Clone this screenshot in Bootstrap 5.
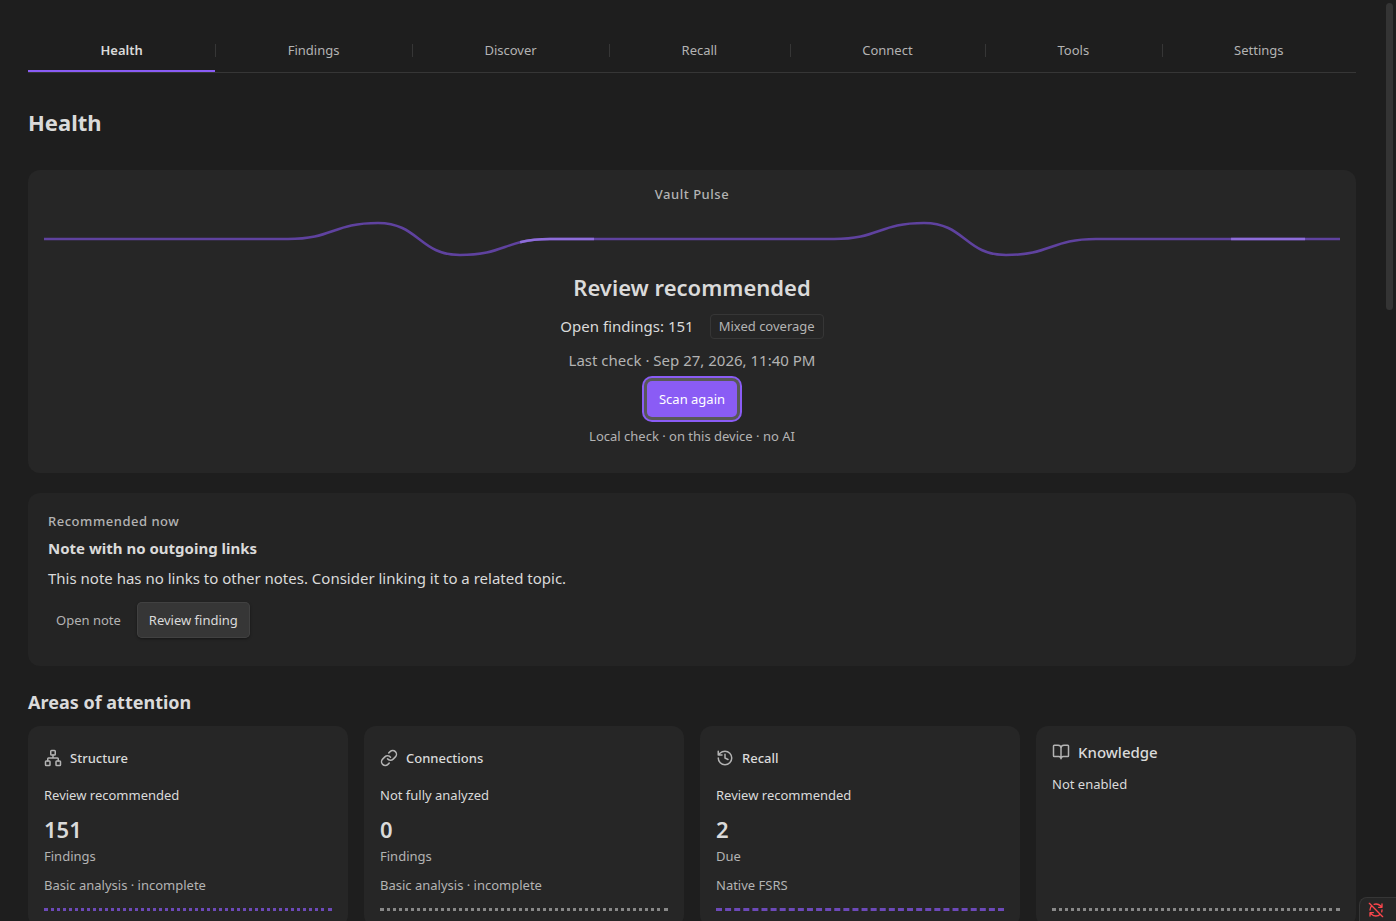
<!DOCTYPE html>
<html lang="en" data-bs-theme="dark">
<head>
<meta charset="utf-8">
<meta name="viewport" content="width=device-width, initial-scale=1">
<title>Health</title>
<link href="https://cdn.jsdelivr.net/npm/bootstrap@5.3.0/dist/css/bootstrap.min.css" rel="stylesheet">
<style>
:root { --accent: #8a5cf5; --line: #363636; --ink: #dadada; --muted: #b3b3b3; }
html, body { height: 100%; }
body { background: #1e1e1e; color: var(--ink); font: 400 15px/24px "Noto Sans", sans-serif; overflow: hidden; }
h1, h2, h3, p { margin: 0; color: inherit; }
.page-body { padding: 28px 40px 28px 28px; }
.text-dim { color: var(--muted); }
.small-text { font-size: 13px; line-height: 20px; }
.tab-bar { border-bottom: 1px solid var(--line); }
.tab-bar .nav-link { position: relative; height: 44px; padding: 0 8px; color: var(--muted); font-size: 13px; line-height: 20px; border: 0; }
.tab-bar .nav-item + .nav-item .nav-link::before { content: ""; position: absolute; left: 0; top: 16px; height: 13px; width: 1px; background: var(--line); }
.tab-bar .nav-link.active { color: var(--ink); font-weight: 600; box-shadow: inset 0 -2px var(--accent); }
.page-title { font-size: 22px; line-height: 30px; font-weight: 700; margin: 34px 0 33px; }
.panel { background: #262626; border-radius: 12px; }
.pulse-panel { padding: 14px 16px 27px; margin-bottom: 20px; }
.next-panel { background: #242424; padding: 18px 20px 28px; margin-bottom: 22px; }
.eyebrow { font-size: 13px; line-height: 20px; font-weight: 500; letter-spacing: .04em; color: var(--muted); }
.wave { display: block; width: 100%; height: 64px; margin: 2px 0; fill: none; stroke-width: 2.5; }
.wave path { vector-effect: non-scaling-stroke; }
.status-title { font-size: 22px; line-height: 30px; font-weight: 600; margin-bottom: 12px; }
.chip { border: 1px solid var(--line); border-radius: 4px; padding: 2px 8px; font-size: 13px; line-height: 19px; color: var(--muted); }
.gap-after { margin-bottom: 9px; }
.act { height: 36px; padding: 0 12px; border: 0; border-radius: 5px; font-size: 13px; line-height: 20px; }
.act-main, .act-main:hover { background: var(--accent); color: #fff; box-shadow: 0 0 0 3px #585858, 0 0 0 5px var(--accent); }
.act-plain { padding: 0 8px; color: var(--muted); }
.act-raised { background: #363636; color: var(--ink); box-shadow: inset 0 0 0 1px #414141, 0 1px 3px rgba(0,0,0,.4); }
.note-title { font-size: 15px; line-height: 26px; font-weight: 700; margin-bottom: 5px; }
.section-title { font-size: 18px; line-height: 28px; font-weight: 700; margin-bottom: 10px; }
.area { padding: 16px; height: 100%; display: flex; flex-direction: column; }
.area-head { display: flex; align-items: center; gap: 8px; height: 32px; margin-bottom: 11px; font-size: 13px; line-height: 20px; font-weight: 500; }
.area-head.off { height: 20px; margin-bottom: 12px; font-size: 15px; }
.glyph { width: 18px; height: 18px; fill: none; stroke: var(--muted); stroke-width: 2; stroke-linecap: round; stroke-linejoin: round; flex: none; }
.count { font-size: 22px; line-height: 30px; font-weight: 600; margin: 9px 0 2px; }
.coverage { margin: 9px 0 13px; }
.rule { border-top: 3px dotted #888; }
.rule-on { border-top-color: #6c49b8; }
.rule-dash { border-top-style: dashed; }
.scroll-thumb { position: fixed; top: 3px; right: 3px; width: 7px; height: calc(33.33vh); border-radius: 4px; background: #343434; }
.sync-corner { position: fixed; right: 0; bottom: 0; padding: 4px 12px 3px 8px; background: #262626; border: 1px solid var(--line); border-width: 1px 0 0 1px; border-radius: 8px 0 0 0; line-height: 0; }
.sync-corner .glyph { width: 16px; height: 16px; stroke: #fb464c; }
</style>
</head>
<body>
<main class="page-body">
  <ul class="nav tab-bar flex-nowrap">
    <li class="nav-item flex-fill"><a class="nav-link active d-flex align-items-center justify-content-center" aria-current="page" href="#">Health</a></li>
    <li class="nav-item flex-fill"><a class="nav-link d-flex align-items-center justify-content-center" href="#">Findings</a></li>
    <li class="nav-item flex-fill"><a class="nav-link d-flex align-items-center justify-content-center" href="#">Discover</a></li>
    <li class="nav-item flex-fill"><a class="nav-link d-flex align-items-center justify-content-center" href="#">Recall</a></li>
    <li class="nav-item flex-fill"><a class="nav-link d-flex align-items-center justify-content-center" href="#">Connect</a></li>
    <li class="nav-item flex-fill"><a class="nav-link d-flex align-items-center justify-content-center" href="#">Tools</a></li>
    <li class="nav-item flex-fill"><a class="nav-link d-flex align-items-center justify-content-center" href="#">Settings</a></li>
  </ul>

  <h1 class="page-title">Health</h1>

  <section class="panel pulse-panel d-flex flex-column align-items-center text-center">
    <div class="eyebrow">Vault Pulse</div>
    <svg class="wave" viewBox="0 0 1296 64" preserveAspectRatio="none" aria-hidden="true">
      <path stroke="#5f429f" d="M0 33H244C289 33 289 17 334 17C375 17 375 49 416 49C461 49 461 33 506 33H790C835 33 835 17 880 17C921 17 921 49 962 49C1007 49 1007 33 1052 33H1296"/>
      <path stroke="#8e6dd9" stroke-dasharray="0 488 74 649 74 999" d="M0 33H244C289 33 289 17 334 17C375 17 375 49 416 49C461 49 461 33 506 33H790C835 33 835 17 880 17C921 17 921 49 962 49C1007 49 1007 33 1052 33H1296"/>
    </svg>
    <h2 class="status-title">Review recommended</h2>
    <div class="d-flex align-items-start gap-3 gap-after"><span>Open findings: 151</span><span class="chip">Mixed coverage</span></div>
    <p class="text-dim gap-after">Last check · Sep 27, 2026, 11:40 PM</p>
    <button type="button" class="btn act act-main gap-after">Scan again</button>
    <p class="small-text text-dim">Local check · on this device · no AI</p>
  </section>

  <section class="panel next-panel">
    <div class="eyebrow mb-1">Recommended now</div>
    <h3 class="note-title">Note with no outgoing links</h3>
    <p class="mb-2">This note has no links to other notes. Consider linking it to a related topic.</p>
    <div class="d-flex gap-2 pt-1">
      <button type="button" class="btn act act-plain">Open note</button>
      <button type="button" class="btn act act-raised">Review finding</button>
    </div>
  </section>

  <h2 class="section-title">Areas of attention</h2>
  <div class="row row-cols-4 gx-3">
    <div class="col"><article class="panel area">
      <h3 class="area-head"><svg class="glyph" viewBox="0 0 24 24"><rect x="16" y="16" width="6" height="6" rx="1"/><rect x="2" y="16" width="6" height="6" rx="1"/><rect x="9" y="2" width="6" height="6" rx="1"/><path d="M5 16v-3a1 1 0 0 1 1-1h12a1 1 0 0 1 1 1v3M12 12V8"/></svg>Structure</h3>
      <p class="small-text">Review recommended</p>
      <div class="count">151</div>
      <p class="small-text text-dim">Findings</p>
      <p class="small-text text-dim coverage">Basic analysis · incomplete</p>
      <div class="rule rule-on mt-auto"></div>
    </article></div>
    <div class="col"><article class="panel area">
      <h3 class="area-head"><svg class="glyph" viewBox="0 0 24 24"><path d="M10 13a5 5 0 0 0 7.54.54l3-3a5 5 0 0 0-7.07-7.07l-1.72 1.71M14 11a5 5 0 0 0-7.54-.54l-3 3a5 5 0 0 0 7.07 7.07l1.71-1.71"/></svg>Connections</h3>
      <p class="small-text">Not fully analyzed</p>
      <div class="count">0</div>
      <p class="small-text text-dim">Findings</p>
      <p class="small-text text-dim coverage">Basic analysis · incomplete</p>
      <div class="rule mt-auto"></div>
    </article></div>
    <div class="col"><article class="panel area">
      <h3 class="area-head"><svg class="glyph" viewBox="0 0 24 24"><path d="M3 12a9 9 0 1 0 9-9 9.75 9.75 0 0 0-6.74 2.74L3 8M3 3v5h5M12 7v5l4 2"/></svg>Recall</h3>
      <p class="small-text">Review recommended</p>
      <div class="count">2</div>
      <p class="small-text text-dim">Due</p>
      <p class="small-text text-dim coverage">Native FSRS</p>
      <div class="rule rule-on rule-dash mt-auto"></div>
    </article></div>
    <div class="col"><article class="panel area">
      <h3 class="area-head off"><svg class="glyph" viewBox="0 0 24 24"><path d="M12 7v14M3 18a1 1 0 0 1-1-1V4a1 1 0 0 1 1-1h5a4 4 0 0 1 4 4 4 4 0 0 1 4-4h5a1 1 0 0 1 1 1v13a1 1 0 0 1-1 1h-6a3 3 0 0 0-3 3 3 3 0 0 0-3-3z"/></svg>Knowledge</h3>
      <p class="small-text">Not enabled</p>
      <div class="rule mt-auto"></div>
    </article></div>
  </div>
</main>
<div class="scroll-thumb" aria-hidden="true"></div>
<div class="sync-corner"><svg class="glyph" viewBox="0 0 24 24" role="img" aria-label="Sync off"><path d="M21 8l-2.26-2.26A9.75 9.75 0 0 0 12 3c-1 0-1.97.16-2.87.47M8 16H3v5M3 12c0-2.49 1-4.74 2.64-6.36M3 16l2.26 2.26A9.75 9.75 0 0 0 12 21c2.49 0 4.74-1 6.36-2.64M21 12c0 1-.16 1.97-.47 2.87M21 3v5h-5M22 22 2 2"/></svg></div>
<script src="https://cdn.jsdelivr.net/npm/bootstrap@5.3.0/dist/js/bootstrap.bundle.min.js"></script>
</body>
</html>
